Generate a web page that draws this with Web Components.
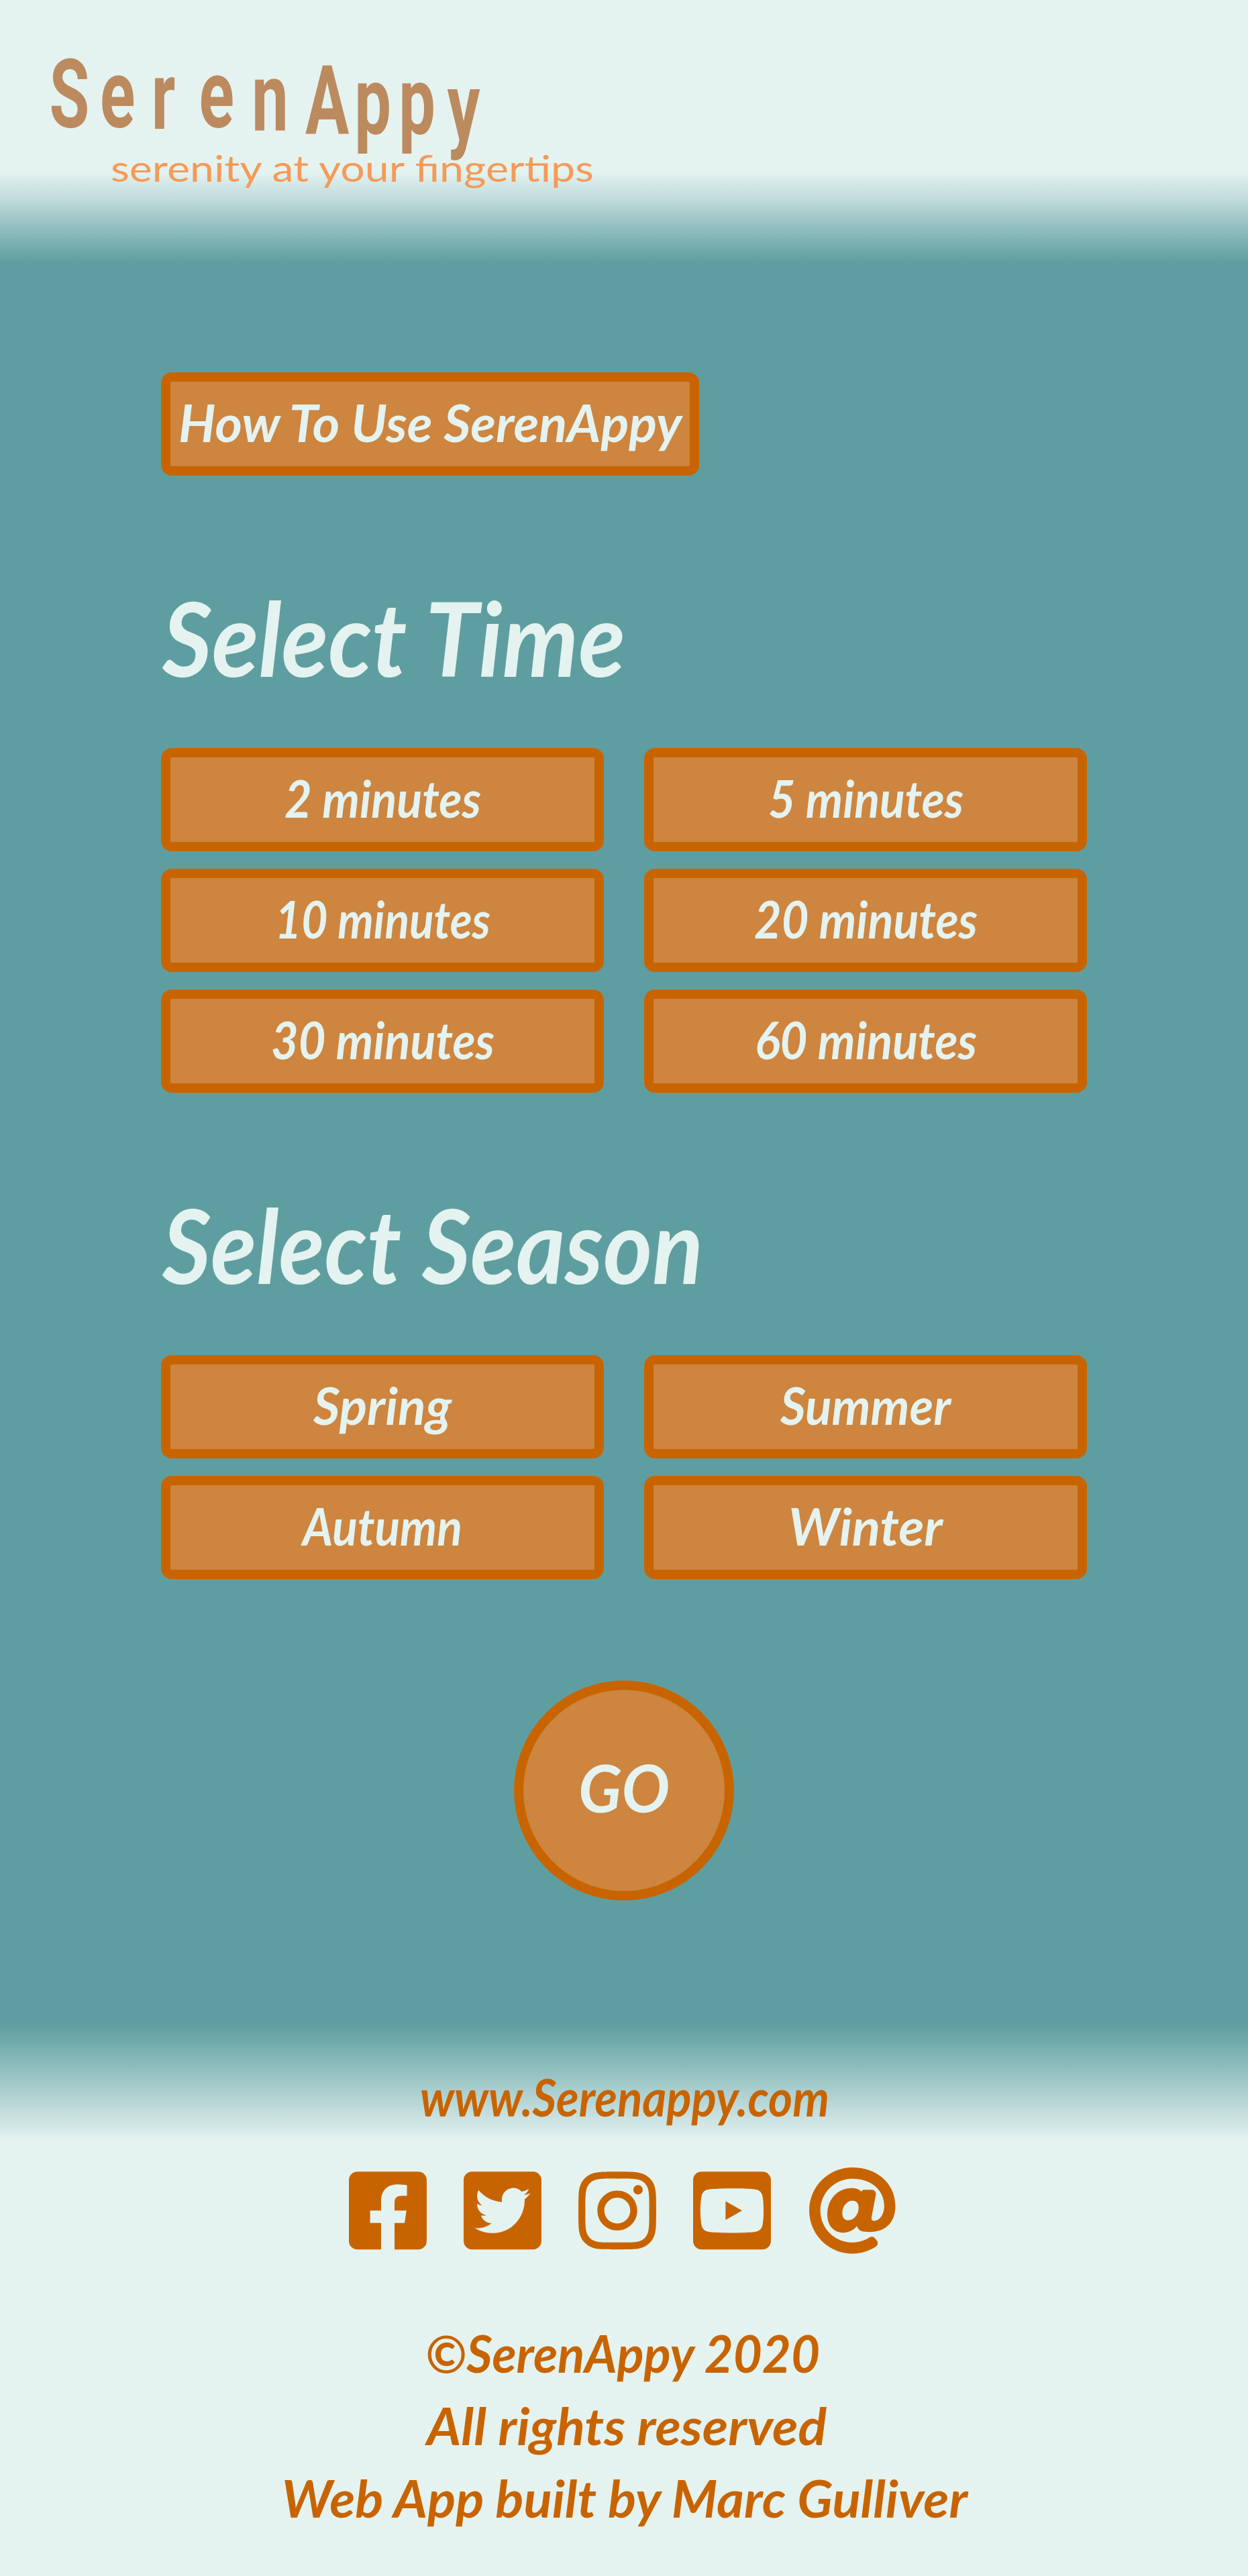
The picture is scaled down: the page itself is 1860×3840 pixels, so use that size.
<!DOCTYPE html>
<html lang="en">
<head>
<meta charset="utf-8">
<title>SerenAppy</title>
<style>
  html, body { margin: 0; }
  body {
    --mist: #e4f3f0; --teal: #5f9ea0; --rust: #c86400; --peru: #cd853f;
    background: var(--teal); color: var(--mist);
    font-family: Lato, "Open Sans", sans-serif;
  }
</style>
</head>
<body>
<seren-app></seren-app>
<script>
/* One line of lettering fitted to an exact width. */
class ScriptText extends HTMLElement {
  connectedCallback() {
    const a = (n, d) => Number(this.getAttribute(n) ?? d);
    const w = a('w', 100), h = a('h', 126), y = a('y', 90), size = a('size', 76), dx = a('dx', 0);
    const weight = a('weight', 700);
    const root = this.attachShadow({ mode: 'open' });
    root.innerHTML = `<style>:host{display:block;width:${w}px;height:${h}px;flex:none}
      svg{display:block;overflow:visible}
      text{font:italic ${weight} ${size}px Lato,"Open Sans",sans-serif;fill:currentColor}</style>
      <svg width="${w}" height="${h}"><text x="${dx}" y="${y}" textLength="${w}" lengthAdjust="spacingAndGlyphs"></text></svg>`;
    root.querySelector('text').textContent = this.getAttribute('text');
  }
}
customElements.define('script-text', ScriptText);

class SerenButton extends HTMLElement {
  connectedCallback() {
    this.attachShadow({ mode: 'open' }).innerHTML = `<style>
      :host{display:block}
      button{display:flex;justify-content:center;align-items:center;box-sizing:border-box;width:100%;height:154px;margin:0;padding:0;
        border:14px solid var(--rust);border-radius:16px;background:var(--peru);color:var(--mist);font:inherit}
      :host([round]){width:328px}
      :host([round]) button{height:328px;border-radius:50%}
    </style><button><slot></slot></button>`;
  }
}
customElements.define('seren-button', SerenButton);

class SerenHeader extends HTMLElement {
  connectedCallback() {
    this.attachShadow({ mode: 'open' }).innerHTML = `<style>
      :host{display:block;height:400px;background:linear-gradient(var(--mist) 256px,#bedada 298px,#74adae 367px,var(--teal) 394px)}
      svg{display:block}
      .brand{font:700 143px Roboto,sans-serif;fill:#bc8a5f}
      .tag{font:400 54px Lato,sans-serif;fill:#f59a58}
    </style>
    <svg width="960" height="400" viewBox="0 0 960 400">
      <g transform="scale(.68 1)"><text class="brand"
        x="108 219 332 436 552 669 777 874 980"
        y="190 190 192 190 194 199 200 200 208">SerenAppy</text></g>
      <text class="tag" x="165" y="271" textLength="720" lengthAdjust="spacingAndGlyphs">serenity at your fingertips</text>
    </svg>`;
  }
}
customElements.define('seren-header', SerenHeader);

class OptionGroup extends HTMLElement {
  connectedCallback() {
    this.attachShadow({ mode: 'open' }).innerHTML = `<style>
      :host{display:block}
      h1{margin:0;height:315px;padding-left:2px}
      .grid{display:grid;grid-template-columns:1fr 1fr;column-gap:60px;row-gap:26px}
    </style><h1><slot name="title"></slot></h1><div class="grid"><slot></slot></div>`;
  }
}
customElements.define('option-group', OptionGroup);

const ICONS = {
  facebook: [448, 'M400 32H48A48 48 0 0 0 0 80v352a48 48 0 0 0 48 48h137.25V327.69h-63V256h63v-54.64c0-62.15 37-96.48 93.67-96.48 27.14 0 55.52 4.84 55.52 4.84v61h-31.27c-30.81 0-40.42 19.12-40.42 38.73V256h68.78l-11 71.69h-57.78V480H400a48 48 0 0 0 48-48V80a48 48 0 0 0-48-48z'],
  twitter: [448, 'M400 32H48C21.5 32 0 53.5 0 80v352c0 26.5 21.5 48 48 48h352c26.5 0 48-21.5 48-48V80c0-26.5-21.5-48-48-48zm-48.9 158.8c.2 2.8.2 5.7.2 8.5 0 86.7-66 186.6-186.6 186.6-37.2 0-71.7-10.8-100.7-29.4 5.3.6 10.4.8 15.8.8 30.7 0 58.9-10.4 81.4-28-28.8-.6-53-19.5-61.3-45.5 10.1 1.5 19.2 1.5 29.6-1.2-30-6.1-52.5-32.5-52.5-64.4v-.8c8.7 4.9 18.9 7.9 29.6 8.3a65.447 65.447 0 0 1-29.2-54.6c0-12.2 3.2-23.4 8.9-33.1 32.3 39.8 80.8 65.8 135.2 68.6-9.3-44.5 24-80.6 64-80.6 18.9 0 35.9 7.9 47.9 20.7 14.8-2.8 29-8.3 41.6-15.8-4.9 15.2-15.2 28-28.8 36.1 13.2-1.4 26-5.1 37.8-10.2-8.9 13.1-20.1 24.7-32.9 34z'],
  instagram: [448, 'M224.1 141c-63.6 0-114.9 51.3-114.9 114.9s51.3 114.9 114.9 114.9S339 319.5 339 255.9 287.7 141 224.1 141zm0 189.6c-41.1 0-74.7-33.5-74.7-74.7s33.5-74.7 74.7-74.7 74.7 33.5 74.7 74.7-33.6 74.7-74.7 74.7zm146.4-194.3c0 14.9-12 26.8-26.8 26.8-14.9 0-26.8-12-26.8-26.8s12-26.8 26.8-26.8 26.8 12 26.8 26.8zm76.1 27.2c-1.7-35.9-9.9-67.7-36.2-93.9-26.2-26.2-58-34.4-93.9-36.2-37-2.1-147.9-2.1-184.9 0-35.8 1.7-67.6 9.9-93.9 36.1s-34.4 58-36.2 93.9c-2.1 37-2.1 147.9 0 184.9 1.7 35.9 9.9 67.7 36.2 93.9s58 34.4 93.9 36.2c37 2.1 147.9 2.1 184.9 0 35.9-1.7 67.7-9.9 93.9-36.2 26.2-26.2 34.4-58 36.2-93.9 2.1-37 2.1-147.8 0-184.8zM398.8 388c-7.8 19.6-22.9 34.7-42.6 42.6-29.5 11.7-99.5 9-132.1 9s-102.7 2.6-132.1-9c-19.6-7.8-34.7-22.9-42.6-42.6-11.7-29.5-9-99.5-9-132.1s-2.6-102.7 9-132.1c7.8-19.6 22.9-34.7 42.6-42.6 29.5-11.7 99.5-9 132.1-9s102.7-2.6 132.1 9c19.6 7.8 34.7 22.9 42.6 42.6 11.7 29.5 9 99.5 9 132.1s2.7 102.7-9 132.1z'],
  youtube: [448, 'M186.8 202.1l95.2 54.1-95.2 54.1V202.1zM448 80v352c0 26.5-21.5 48-48 48H48c-26.5 0-48-21.5-48-48V80c0-26.5 21.5-48 48-48h352c26.5 0 48 21.5 48 48zm-42 176.3s0-59.6-7.6-88.2c-4.2-15.8-16.5-28.2-32.2-32.4C337.9 128 224 128 224 128s-113.9 0-142.2 7.7c-15.7 4.2-28 16.6-32.2 32.4-7.6 28.5-7.6 88.2-7.6 88.2s0 59.6 7.6 88.2c4.2 15.8 16.5 27.7 32.2 31.9C110.1 384 224 384 224 384s113.9 0 142.2-7.7c15.7-4.2 28-16.1 32.2-31.9 7.6-28.5 7.6-88.1 7.6-88.1z'],
  email: [512, 'M256 8C118.941 8 8 118.919 8 256c0 137.059 110.919 248 248 248 48.154 0 95.342-14.14 135.408-40.223 12.005-7.815 14.625-24.288 5.552-35.372l-10.177-12.433c-7.671-9.371-21.179-11.667-31.373-5.129C325.92 429.757 291.314 440 256 440c-101.458 0-184-82.542-184-184S154.542 72 256 72c100.139 0 184 57.619 184 160 0 38.786-21.093 79.742-58.17 83.693-17.349-.454-16.91-12.857-13.476-30.024l23.433-121.11C394.653 149.75 383.308 136 368.225 136h-44.981a13.518 13.518 0 0 0-13.432 11.993l-.01.092c-14.697-17.901-40.448-21.775-59.971-21.775-74.58 0-137.831 62.234-137.831 151.46 0 65.303 36.785 105.87 96 105.87 26.984 0 57.369-15.637 74.991-38.333 9.522 34.104 40.613 34.103 70.71 34.103C462.609 379.41 504 307.798 504 232 504 95.653 394.023 8 256 8zm-21.68 304.43c-22.249 0-36.07-15.623-36.07-40.771 0-44.993 30.779-72.729 58.63-72.729 22.292 0 35.601 15.241 35.601 40.77 0 45.061-33.875 72.73-58.161 72.73z']
};
class SocialIcon extends HTMLElement {
  connectedCallback() {
    const [w, d] = ICONS[this.getAttribute('name')];
    this.attachShadow({ mode: 'open' }).innerHTML = `<style>:host{display:block}svg{display:block;fill:currentColor}</style>
      <svg width="${w * 132.5 / 512}" height="132.5" viewBox="0 0 ${w} 512"><path d="${d}"/></svg>`;
  }
}
customElements.define('social-icon', SocialIcon);

class SerenFooter extends HTMLElement {
  connectedCallback() {
    this.attachShadow({ mode: 'open' }).innerHTML = `<style>
      :host{display:flex;flex-direction:column;align-items:center;box-sizing:border-box;height:840px;padding-top:77px;color:var(--rust);
        background:linear-gradient(var(--teal) 17px,#74adae 47px,#bedada 142px,var(--mist) 192px)}
      nav{display:flex;gap:55px;margin:44px 4px 97.5px 0}
    </style>
    <script-text text="www.Serenappy.com" w="610" h="108" y="78" dx="1"></script-text>
    <nav><social-icon name="facebook"></social-icon><social-icon name="twitter"></social-icon><social-icon name="instagram"></social-icon><social-icon name="youtube"></social-icon><social-icon name="email"></social-icon></nav>
    <script-text text="©SerenAppy 2020" w="588" h="108" y="78" dx="-2"></script-text>
    <script-text text="All rights reserved" w="596" h="108" y="78" dx="4"></script-text>
    <script-text text="Web App built by Marc Gulliver" w="1022" h="108" y="78" dx="1"></script-text>`;
  }
}
customElements.define('seren-footer', SerenFooter);

class SerenApp extends HTMLElement {
  connectedCallback() {
    const btn = ([t, w]) => `<seren-button><script-text text="${t}" w="${w}"></script-text></seren-button>`;
    const times = [['2 minutes', 293], ['5 minutes', 291], ['10 minutes', 321], ['20 minutes', 333], ['30 minutes', 333], ['60 minutes', 331]];
    const seasons = [['Spring', 206], ['Summer', 254], ['Autumn', 238], ['Winter', 230]];
    this.attachShadow({ mode: 'open' }).innerHTML = `<style>
      :host{display:block;width:1860px}
      main{display:flex;flex-direction:column;box-sizing:border-box;height:2600px;padding:155px 240px 0;background:var(--teal)}
      .help{width:802px}
      .time{margin-top:91px}
      .season{margin-top:76px}
      .go{align-self:center;margin-top:151px}
    </style>
    <seren-header></seren-header>
    <main>
      <seren-button class="help"><script-text text="How To Use SerenAppy" w="750"></script-text></seren-button>
      <option-group class="time"><script-text slot="title" text="Select Time" w="690" h="315" y="209" size="154"></script-text>${times.map(btn).join('')}</option-group>
      <option-group class="season"><script-text slot="title" text="Select Season" w="806" h="315" y="209" size="154"></script-text>${seasons.map(btn).join('')}</option-group>
      <seren-button class="go" round><script-text text="GO" w="136" h="160" y="113" size="97"></script-text></seren-button>
    </main>
    <seren-footer></seren-footer>`;
  }
}
customElements.define('seren-app', SerenApp);
</script>
</body>
</html>
